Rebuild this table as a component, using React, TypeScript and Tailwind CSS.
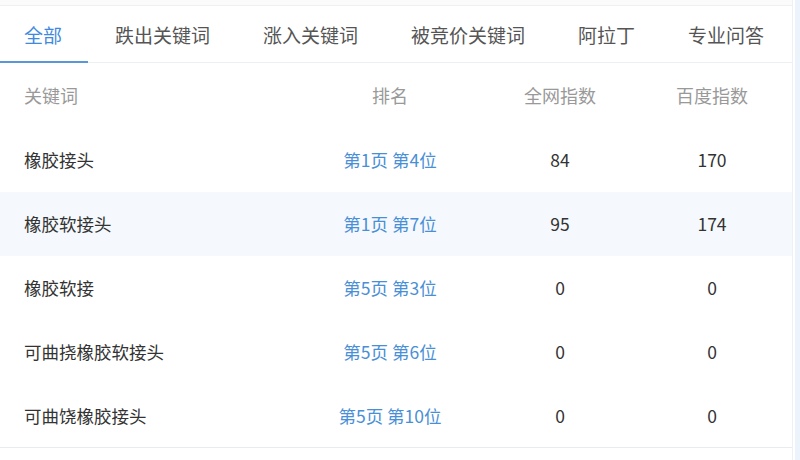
import React, { useState } from 'react';

type Row = { keyword: string; rank: string; net: string; baidu: string };

const tabs = ['全部', '跌出关键词', '涨入关键词', '被竞价关键词', '阿拉丁', '专业问答'];

const rows: Row[] = [
  { keyword: '橡胶接头', rank: '第1页 第4位', net: '84', baidu: '170' },
  { keyword: '橡胶软接头', rank: '第1页 第7位', net: '95', baidu: '174' },
  { keyword: '橡胶软接', rank: '第5页 第3位', net: '0', baidu: '0' },
  { keyword: '可曲挠橡胶软接头', rank: '第5页 第6位', net: '0', baidu: '0' },
  { keyword: '可曲饶橡胶接头', rank: '第5页 第10位', net: '0', baidu: '0' },
];

const App: React.FC = () => {
  const [active, setActive] = useState(0);

  return (
    <div
      className="w-[800px] h-[460px] bg-white flex overflow-hidden"
      style={{ fontFamily: '"Noto Sans CJK SC", "Noto Sans", sans-serif' }}
    >
      <div className="w-[792px] shrink-0 flex flex-col">
        <div className="h-[6px] bg-[#fbfbfb] border-b border-[#f0f0f0]" />
        {/* tabs */}
        <div className="h-[57px] flex items-stretch border-b border-[#edf0f3]">
          {tabs.map((t, i) => (
            <button
              key={t}
              onClick={() => setActive(i)}
              className={
                'relative shrink-0 whitespace-nowrap pl-6 pr-[26px] mr-[3px] text-[19px] leading-none pt-[1px] ' +
                (i === active ? 'text-[#3f8ae0]' : 'text-[#555]')
              }
            >
              {t}
              {i === active && (
                <span className="absolute left-0 right-0 -bottom-px h-[2px] bg-[#5a97d8]" />
              )}
            </button>
          ))}
        </div>
        {/* header */}
        <div className="h-[65px] grid grid-cols-[300px_180px_160px_144px] items-center text-[18px] text-[#999]">
          <div className="pl-6">关键词</div>
          <div className="text-center">排名</div>
          <div className="text-center">全网指数</div>
          <div className="text-center">百度指数</div>
        </div>
        {rows.map((r, i) => (
          <div
            key={r.keyword}
            className={
              'h-[64px] grid grid-cols-[300px_180px_160px_144px] items-center text-[17.5px] text-[#333] ' +
              (i === 1 ? 'bg-[#f5f9fd]' : '')
            }
          >
            <div className="pl-6">{r.keyword}</div>
            <div className="text-center text-[#4a8fd6]">{r.rank}</div>
            <div className="text-center">{r.net}</div>
            <div className="text-center">{r.baidu}</div>
          </div>
        ))}
        <div className="border-t border-[#e8ecf0] mt-[-1px]" />
      </div>
      <div className="w-px bg-[#eef1f4]" />
      <div className="w-[2px]" />
      <div className="flex-1 bg-[#edf3fa]" />
    </div>
  );
};

export default App;
